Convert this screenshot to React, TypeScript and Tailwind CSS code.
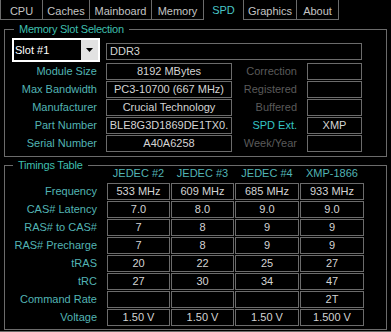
import React from "react";

const B = "border border-[#6b6b6b]";
const LBL = "text-[#52b4b4]";
const VAL = "text-[#d4d4d4]";

const tabs: { name: string; w: string; cls: string }[] = [
  { name: "CPU", w: "w-[43px]", cls: "border-l border-r border-b" },
  { name: "Caches", w: "w-[47px]", cls: "border-r border-b" },
  { name: "Mainboard", w: "w-[62px]", cls: "border-r border-b" },
  { name: "Memory", w: "w-[52px]", cls: "border-r border-b" },
  { name: "SPD", w: "w-[39px]", cls: "" },
  { name: "Graphics", w: "w-[54px]", cls: "border-l border-r border-b" },
  { name: "About", w: "w-[42px]", cls: "border-r border-b" },
];

const slotRows: [string, string, string, string, boolean][] = [
  ["Module Size", "8192 MBytes", "Correction", "", false],
  ["Max Bandwidth", "PC3-10700 (667 MHz)", "Registered", "", false],
  ["Manufacturer", "Crucial Technology", "Buffered", "", false],
  ["Part Number", "BLE8G3D1869DE1TX0.", "SPD Ext.", "XMP", true],
  ["Serial Number", "A40A6258", "Week/Year", "", false],
];

const heads = ["JEDEC #2", "JEDEC #3", "JEDEC #4", "XMP-1866"];
const colW = ["w-[63px]", "w-[63px]", "w-[64px]", "w-[64px]"];

const timing: [string, string[]][] = [
  ["Frequency", ["533 MHz", "609 MHz", "685 MHz", "933 MHz"]],
  ["CAS# Latency", ["7.0", "8.0", "9.0", "9.0"]],
  ["RAS# to CAS#", ["7", "8", "9", "9"]],
  ["RAS# Precharge", ["7", "8", "9", "9"]],
  ["tRAS", ["20", "22", "25", "27"]],
  ["tRC", ["27", "30", "34", "47"]],
  ["Command Rate", ["", "", "", "2T"]],
  ["Voltage", ["1.50 V", "1.50 V", "1.50 V", "1.500 V"]],
];

export default function App() {
  return (
    <div className="w-[391px] h-[332px] bg-black overflow-hidden font-['Liberation_Sans',Arial,sans-serif] text-[11px] leading-[13px]">
      {/* Tabs */}
      <div className="flex h-[20px]">
        {tabs.map((t) => (
          <div
            key={t.name}
            className={`${t.w} h-[20px] ${t.cls} border-[#6b6b6b] text-center ${
              t.name === "SPD" ? "pt-[4px] text-[#48c6c6]" : "pt-[5px] text-[#c4c4c4]"
            }`}
          >
            {t.name}
          </div>
        ))}
      </div>

      {/* Memory Slot Selection */}
      <fieldset className={`ml-[4px] mt-[3px] w-[383px] ${B} pt-[2px] pb-[4px]`}>
        <legend className="ml-[9px] px-[5px] leading-[13px] tracking-[-0.25px] text-[#3fbfae]">Memory Slot Selection</legend>
        <div className="flex h-[24px]">
          <div className="ml-[7px] w-[88px] h-[24px] border-2 border-white bg-black flex">
            <div className="flex-1 pl-[1px] leading-[20px] text-white text-[11px]">Slot #1</div>
            <div className="w-[17px] h-[20px] bg-[#e2e2e2] flex items-center justify-center">
              <svg width="9" height="5" viewBox="0 0 9 5">
                <polygon points="1,0 8,0 4.5,4" fill="#000" />
              </svg>
            </div>
          </div>
          <div className={`ml-[6px] mt-[5px] w-[256px] h-[17px] ${B} pl-[3px] leading-[15px] ${VAL}`}>DDR3</div>
        </div>
        <div className="flex flex-col gap-[1px] mt-[1px]">
          {slotRows.map(([l, v, rl, rv, active]) => (
            <div key={l} className="flex h-[17px] leading-[15px]">
              <div className={`w-[94px] pr-[2px] text-right leading-[17px] ${LBL}`}>{l}</div>
              <div className={`ml-[7px] w-[126px] h-[17px] ${B} text-center whitespace-nowrap overflow-hidden ${VAL}`}>{v}</div>
              <div
                className={`w-[68px] pr-[3px] text-right leading-[17px] ${
                  active ? "text-[#34c4c4]" : "text-[#5a5a5a]"
                }`}
              >
                {rl}
              </div>
              <div className={`ml-[7px] w-[55px] h-[17px] ${B} text-center ${VAL}`}>{rv}</div>
            </div>
          ))}
        </div>
      </fieldset>

      {/* Timings Table */}
      <fieldset className={`ml-[4px] mt-[2px] w-[383px] ${B} pt-0 pb-[3px]`}>
        <legend className="ml-[8px] px-[5px] leading-[13px] tracking-[-0.2px] text-[#3fbfae]">Timings Table</legend>
        <div className="flex h-[13px] -mt-[5px] mb-[3px]">
          <div className="w-[96px]" />
          <div className="ml-[6px] flex gap-[1px]">
            {heads.map((h, i) => (
              <div key={h} className={`${colW[i]} text-center ${LBL}`}>{h}</div>
            ))}
          </div>
        </div>
        <div className="flex flex-col gap-[1px]">
          {timing.map(([l, vals]) => (
            <div key={l} className="flex h-[17px]">
              <div className={`w-[94px] pr-[2px] text-right leading-[17px] ${LBL}`}>{l}</div>
              <div className="ml-[8px] flex gap-[1px]">
                {vals.map((v, i) => (
                  <div key={i} className={`${colW[i]} h-[17px] ${B} text-center leading-[15px] ${VAL}`}>{v}</div>
                ))}
              </div>
            </div>
          ))}
        </div>
      </fieldset>
      <div className="mt-[1px] border-t border-[#6b6b6b]" />
    </div>
  );
}
